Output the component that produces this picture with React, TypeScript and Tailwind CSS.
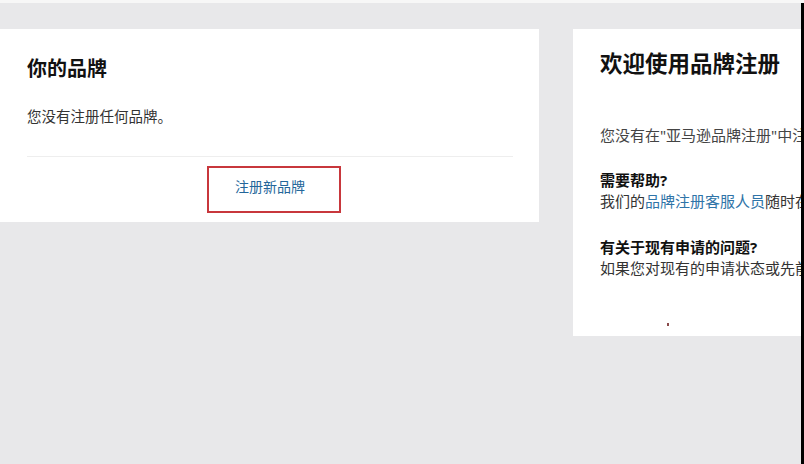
import React from "react";

const font = { fontFamily: '"Noto Sans", "Noto Sans CJK SC", sans-serif' };

const BrandList = function () {
  return (
    <div className="w-[539px] h-[193px] bg-white flex flex-col px-[27px]">
      {/* header */}
      <div className="pt-[27px] text-[20px] leading-[26px] font-bold text-[#111]">你的品牌</div>
      <div className="mt-[24px] text-[14.5px] leading-[20px] text-[#333]">您没有注册任何品牌。</div>
      <div className="mt-[30px] mr-[-1px] border-t border-[#eeeeee]" />
      <div className="flex mt-[9px] pl-[180px]">
        <button className="w-[134px] h-[47px] border-2 border-[#c8373c] text-[14px] text-[#23669a] pb-[6px] pr-[8px]">
          注册新品牌
        </button>
      </div>
    </div>
  );
};

const Welcome = function () {
  return (
    <div className="w-[228px] h-[307px] bg-white overflow-hidden pl-[27px] whitespace-nowrap relative">
      <div className="pt-[20px] text-[22.5px] leading-[30px] font-bold text-[#111]">欢迎使用品牌注册</div>
      <div className="mt-[46px] text-[15px] leading-[20px] text-[#444]">
        您没有在"亚马逊品牌注册"中注册
      </div>
      <div className="mt-[25px] text-[15px] leading-[21px] font-bold text-[#111]">需要帮助?</div>
      <div className="text-[15px] leading-[20px] text-[#333]">
        我们的<span className="text-[#2f74a8]">品牌注册客服人员</span>随时在
      </div>
      <div className="mt-[26px] text-[15px] leading-[21px] font-bold text-[#111]">有关于现有申请的问题?</div>
      <div className="text-[15px] leading-[20px] text-[#333]">如果您对现有的申请状态或先前</div>
      {/* stray pixel */}
      <div className="absolute left-[94px] top-[294px] w-[2px] h-[3px] bg-[#8a4a4a]" />
    </div>
  );
};

export default function App() {
  return (
    <div className="w-[804px] h-[464px] bg-[#e8e8ea] flex flex-col overflow-hidden" style={font}>
      <div className="h-[3px] bg-[#f7f7f7]" />
      <div className="flex flex-1">
        <div className="flex flex-1 items-start pt-[26px]">
          <BrandList />
          <div className="ml-[34px]">
            <Welcome />
          </div>
        </div>
        <div className="w-[3px] bg-black" />
      </div>
    </div>
  );
}
